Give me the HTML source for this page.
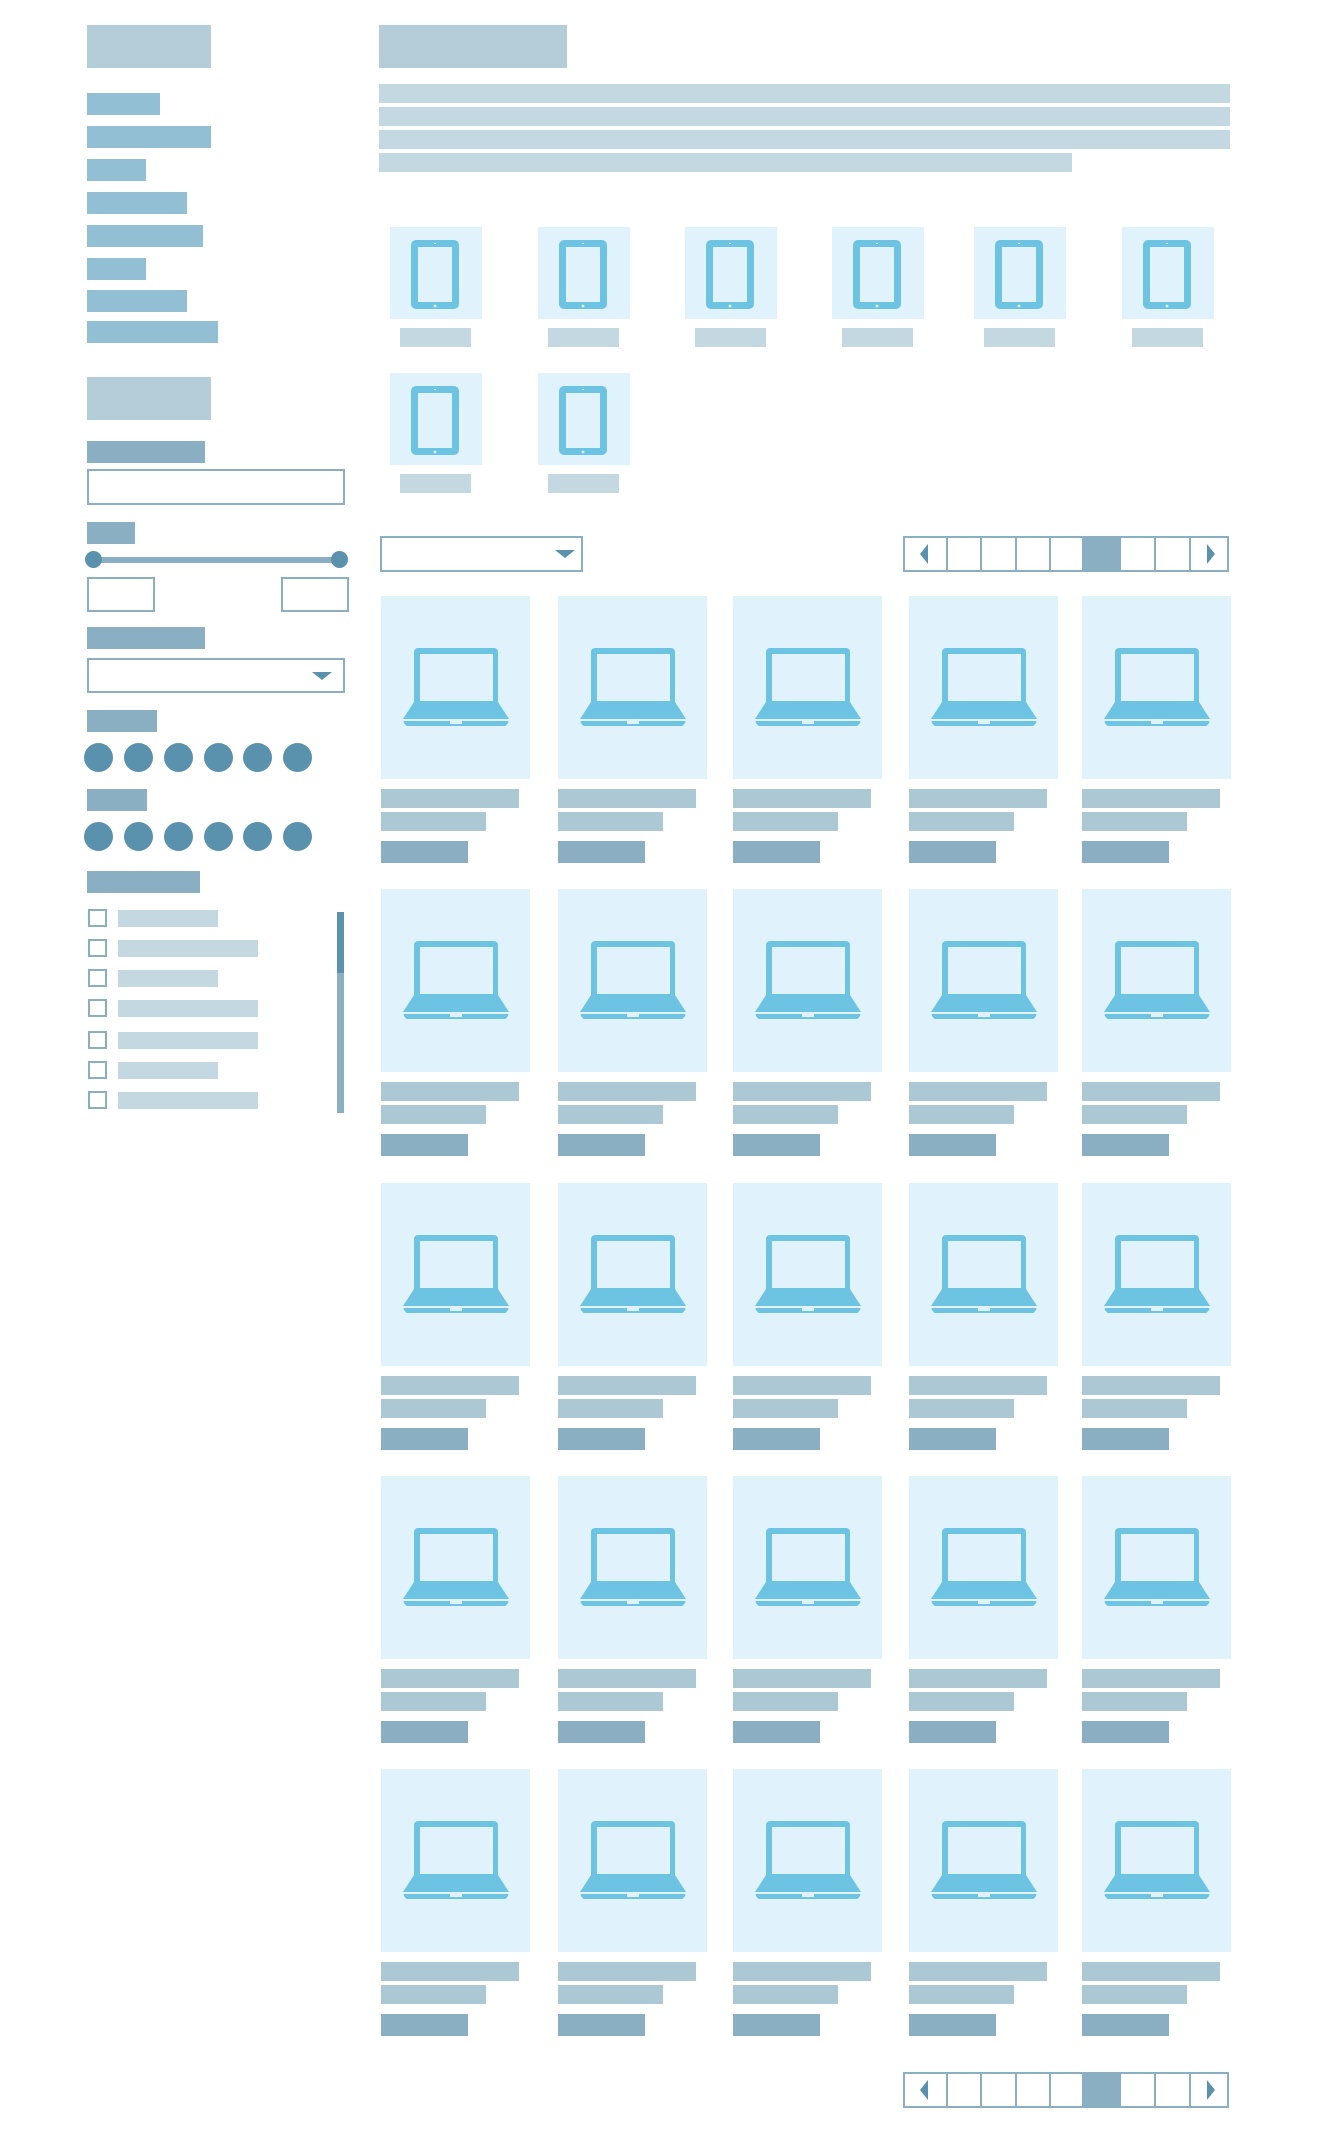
<!DOCTYPE html>
<html><head><meta charset="utf-8"><style>
*{margin:0;padding:0;box-sizing:border-box}
body{width:1330px;height:2137px;background:#fff;position:relative;overflow:hidden;font-family:"Liberation Sans",sans-serif}
div,i,svg{position:absolute;display:block}
.nav{background:#93bfd5;height:22px;left:87px}
.ttl{background:#b5cdd8}
.ln{background:#c3d8e0;left:379px;height:19px}
.lab{background:#8aafc2;left:87px;height:22px}
.box{border:2px solid #8aafc2;background:#fff}
.arr{width:0;height:0;border-left:10px solid transparent;border-right:10px solid transparent;border-top:8px solid #5a92ae}
.dot{width:29px;height:29px;border-radius:50%;background:#5a92ae}
.cb{width:19px;height:18px;border:2px solid #8aafc2;left:88px}
.cbt{background:#c3d8e0;height:17px;left:118px}
.tab{width:92px;height:92px;background:#e0f3fd}
.tab svg{left:21px;top:13px}
.cap{background:#c3d8e0;width:71px;height:19px}
.c{width:149px;height:270px}
.c .t{left:0;top:0;width:149px;height:183px;background:#e0f3fd}
.c svg{left:22px;top:52px}
.b1{top:193px;width:138px;height:19px;background:#acc8d4}
.b2{top:216px;width:105px;height:19px;background:#acc8d4}
.b3{top:245px;width:87px;height:22px;background:#8aafc2}
.pg{left:903px;width:326px;height:36px;border:2px solid #8aafc2;background:#fff}
.pg i{top:0;height:32px;border-left:2px solid #8aafc2}
.pg .act{background:#8aafc2;border:none}
</style></head><body>
<svg width="0" height="0" style="position:absolute"><defs>
<g id="lap"><path fill="#6cc4e2" d="M15,0H91A4,4 0 0 1 95,4V54L106,71H0L11,54V4A4,4 0 0 1 15,0ZM17,6V53H90V6Z"/><path fill="#6cc4e2" d="M1,73H105A2,2 0 0 1 104,76A3,3 0 0 1 101,78H5A3,3 0 0 1 2,76A2,2 0 0 1 1,73Z"/><rect x="47" y="73" width="12" height="3" fill="#e0f3fd"/></g>
<g id="tab"><path fill="#6cc4e2" d="M5,0H43A5,5 0 0 1 48,5V64A5,5 0 0 1 43,69H5A5,5 0 0 1 0,64V5A5,5 0 0 1 5,0ZM7,7V62H41V7Z"/><circle cx="24" cy="66" r="1.4" fill="#e0f3fd"/><rect x="23" y="3" width="2" height="1" fill="#e0f3fd"/></g>
</defs></svg>

<div class="ttl" style="left:87px;top:25px;width:124px;height:43px"></div>
<div class="ttl" style="left:379px;top:25px;width:188px;height:43px"></div>
<div class="ln" style="top:84px;width:851px"></div>
<div class="ln" style="top:107px;width:851px"></div>
<div class="ln" style="top:130px;width:851px"></div>
<div class="ln" style="top:153px;width:693px"></div>

<div class="nav" style="top:93px;width:73px"></div>
<div class="nav" style="top:126px;width:124px"></div>
<div class="nav" style="top:159px;width:59px"></div>
<div class="nav" style="top:192px;width:100px"></div>
<div class="nav" style="top:225px;width:116px"></div>
<div class="nav" style="top:258px;width:59px"></div>
<div class="nav" style="top:290px;width:100px"></div>
<div class="nav" style="top:321px;width:131px"></div>

<div class="ttl" style="left:87px;top:377px;width:124px;height:43px"></div>
<div class="lab" style="top:441px;width:118px"></div>
<div class="box" style="left:87px;top:469px;width:258px;height:36px"></div>
<div class="lab" style="top:522px;width:48px"></div>
<div style="left:93px;top:557px;width:247px;height:6px;background:#8aafc2"></div>
<div style="left:85px;top:551px;width:17px;height:17px;border-radius:50%;background:#5a92ae"></div>
<div style="left:331px;top:551px;width:17px;height:17px;border-radius:50%;background:#5a92ae"></div>
<div class="box" style="left:87px;top:577px;width:68px;height:35px"></div>
<div class="box" style="left:281px;top:577px;width:68px;height:35px"></div>
<div class="lab" style="top:627px;width:118px"></div>
<div class="box" style="left:87px;top:658px;width:258px;height:35px"></div>
<div class="arr" style="left:312px;top:672px"></div>
<div class="lab" style="top:710px;width:70px"></div>
<div class="dot" style="left:84px;top:743px"></div><div class="dot" style="left:124px;top:743px"></div><div class="dot" style="left:164px;top:743px"></div><div class="dot" style="left:204px;top:743px"></div><div class="dot" style="left:243px;top:743px"></div><div class="dot" style="left:283px;top:743px"></div>
<div class="lab" style="top:789px;width:60px"></div>
<div class="dot" style="left:84px;top:822px"></div><div class="dot" style="left:124px;top:822px"></div><div class="dot" style="left:164px;top:822px"></div><div class="dot" style="left:204px;top:822px"></div><div class="dot" style="left:243px;top:822px"></div><div class="dot" style="left:283px;top:822px"></div>
<div class="lab" style="top:871px;width:113px"></div>
<div class="cb" style="top:909px"></div><div class="cbt" style="top:910px;width:100px"></div>
<div class="cb" style="top:939px"></div><div class="cbt" style="top:940px;width:140px"></div>
<div class="cb" style="top:969px"></div><div class="cbt" style="top:970px;width:100px"></div>
<div class="cb" style="top:999px"></div><div class="cbt" style="top:1000px;width:140px"></div>
<div class="cb" style="top:1031px"></div><div class="cbt" style="top:1032px;width:140px"></div>
<div class="cb" style="top:1061px"></div><div class="cbt" style="top:1062px;width:100px"></div>
<div class="cb" style="top:1091px"></div><div class="cbt" style="top:1092px;width:140px"></div>
<div style="left:337px;top:912px;width:7px;height:201px;background:#8aafc2"></div>
<div style="left:337px;top:912px;width:7px;height:61px;background:#5a92ae"></div>

<div class="tab" style="left:390px;top:227px"><svg width="48" height="69"><use href="#tab"/></svg></div>
<div class="tab" style="left:538px;top:227px"><svg width="48" height="69"><use href="#tab"/></svg></div>
<div class="tab" style="left:685px;top:227px"><svg width="48" height="69"><use href="#tab"/></svg></div>
<div class="tab" style="left:832px;top:227px"><svg width="48" height="69"><use href="#tab"/></svg></div>
<div class="tab" style="left:974px;top:227px"><svg width="48" height="69"><use href="#tab"/></svg></div>
<div class="tab" style="left:1122px;top:227px"><svg width="48" height="69"><use href="#tab"/></svg></div>
<div class="cap" style="left:400px;top:328px"></div><div class="cap" style="left:548px;top:328px"></div><div class="cap" style="left:695px;top:328px"></div><div class="cap" style="left:842px;top:328px"></div><div class="cap" style="left:984px;top:328px"></div><div class="cap" style="left:1132px;top:328px"></div>
<div class="tab" style="left:390px;top:373px"><svg width="48" height="69"><use href="#tab"/></svg></div>
<div class="tab" style="left:538px;top:373px"><svg width="48" height="69"><use href="#tab"/></svg></div>
<div class="cap" style="left:400px;top:474px"></div><div class="cap" style="left:548px;top:474px"></div>

<div class="box" style="left:380px;top:536px;width:203px;height:36px"></div>
<div class="arr" style="left:555px;top:550px"></div>

<div class="pg" style="top:536px"><i style="left:41px"></i><i style="left:75px"></i><i style="left:110px"></i><i style="left:144px"></i><i class="act" style="left:177px;width:39px"></i><i style="left:249px"></i><i style="left:284px"></i></div>
<div style="left:920px;top:544px;width:0;height:0;border-top:10px solid transparent;border-bottom:10px solid transparent;border-right:8px solid #5a92ae"></div>
<div style="left:1207px;top:544px;width:0;height:0;border-top:10px solid transparent;border-bottom:10px solid transparent;border-left:8px solid #5a92ae"></div>

<div class="pg" style="top:2072px"><i style="left:41px"></i><i style="left:75px"></i><i style="left:110px"></i><i style="left:144px"></i><i class="act" style="left:177px;width:39px"></i><i style="left:249px"></i><i style="left:284px"></i></div>
<div style="left:920px;top:2080px;width:0;height:0;border-top:10px solid transparent;border-bottom:10px solid transparent;border-right:8px solid #5a92ae"></div>
<div style="left:1207px;top:2080px;width:0;height:0;border-top:10px solid transparent;border-bottom:10px solid transparent;border-left:8px solid #5a92ae"></div>

<div class="c" style="left:381px;top:596px"><i class="t"></i><svg width="106" height="78"><use href="#lap"/></svg><i class="b1"></i><i class="b2"></i><i class="b3"></i></div>
<div class="c" style="left:558px;top:596px"><i class="t"></i><svg width="106" height="78"><use href="#lap"/></svg><i class="b1"></i><i class="b2"></i><i class="b3"></i></div>
<div class="c" style="left:733px;top:596px"><i class="t"></i><svg width="106" height="78"><use href="#lap"/></svg><i class="b1"></i><i class="b2"></i><i class="b3"></i></div>
<div class="c" style="left:909px;top:596px"><i class="t"></i><svg width="106" height="78"><use href="#lap"/></svg><i class="b1"></i><i class="b2"></i><i class="b3"></i></div>
<div class="c" style="left:1082px;top:596px"><i class="t"></i><svg width="106" height="78"><use href="#lap"/></svg><i class="b1"></i><i class="b2"></i><i class="b3"></i></div>
<div class="c" style="left:381px;top:889px"><i class="t"></i><svg width="106" height="78"><use href="#lap"/></svg><i class="b1"></i><i class="b2"></i><i class="b3"></i></div>
<div class="c" style="left:558px;top:889px"><i class="t"></i><svg width="106" height="78"><use href="#lap"/></svg><i class="b1"></i><i class="b2"></i><i class="b3"></i></div>
<div class="c" style="left:733px;top:889px"><i class="t"></i><svg width="106" height="78"><use href="#lap"/></svg><i class="b1"></i><i class="b2"></i><i class="b3"></i></div>
<div class="c" style="left:909px;top:889px"><i class="t"></i><svg width="106" height="78"><use href="#lap"/></svg><i class="b1"></i><i class="b2"></i><i class="b3"></i></div>
<div class="c" style="left:1082px;top:889px"><i class="t"></i><svg width="106" height="78"><use href="#lap"/></svg><i class="b1"></i><i class="b2"></i><i class="b3"></i></div>
<div class="c" style="left:381px;top:1183px"><i class="t"></i><svg width="106" height="78"><use href="#lap"/></svg><i class="b1"></i><i class="b2"></i><i class="b3"></i></div>
<div class="c" style="left:558px;top:1183px"><i class="t"></i><svg width="106" height="78"><use href="#lap"/></svg><i class="b1"></i><i class="b2"></i><i class="b3"></i></div>
<div class="c" style="left:733px;top:1183px"><i class="t"></i><svg width="106" height="78"><use href="#lap"/></svg><i class="b1"></i><i class="b2"></i><i class="b3"></i></div>
<div class="c" style="left:909px;top:1183px"><i class="t"></i><svg width="106" height="78"><use href="#lap"/></svg><i class="b1"></i><i class="b2"></i><i class="b3"></i></div>
<div class="c" style="left:1082px;top:1183px"><i class="t"></i><svg width="106" height="78"><use href="#lap"/></svg><i class="b1"></i><i class="b2"></i><i class="b3"></i></div>
<div class="c" style="left:381px;top:1476px"><i class="t"></i><svg width="106" height="78"><use href="#lap"/></svg><i class="b1"></i><i class="b2"></i><i class="b3"></i></div>
<div class="c" style="left:558px;top:1476px"><i class="t"></i><svg width="106" height="78"><use href="#lap"/></svg><i class="b1"></i><i class="b2"></i><i class="b3"></i></div>
<div class="c" style="left:733px;top:1476px"><i class="t"></i><svg width="106" height="78"><use href="#lap"/></svg><i class="b1"></i><i class="b2"></i><i class="b3"></i></div>
<div class="c" style="left:909px;top:1476px"><i class="t"></i><svg width="106" height="78"><use href="#lap"/></svg><i class="b1"></i><i class="b2"></i><i class="b3"></i></div>
<div class="c" style="left:1082px;top:1476px"><i class="t"></i><svg width="106" height="78"><use href="#lap"/></svg><i class="b1"></i><i class="b2"></i><i class="b3"></i></div>
<div class="c" style="left:381px;top:1769px"><i class="t"></i><svg width="106" height="78"><use href="#lap"/></svg><i class="b1"></i><i class="b2"></i><i class="b3"></i></div>
<div class="c" style="left:558px;top:1769px"><i class="t"></i><svg width="106" height="78"><use href="#lap"/></svg><i class="b1"></i><i class="b2"></i><i class="b3"></i></div>
<div class="c" style="left:733px;top:1769px"><i class="t"></i><svg width="106" height="78"><use href="#lap"/></svg><i class="b1"></i><i class="b2"></i><i class="b3"></i></div>
<div class="c" style="left:909px;top:1769px"><i class="t"></i><svg width="106" height="78"><use href="#lap"/></svg><i class="b1"></i><i class="b2"></i><i class="b3"></i></div>
<div class="c" style="left:1082px;top:1769px"><i class="t"></i><svg width="106" height="78"><use href="#lap"/></svg><i class="b1"></i><i class="b2"></i><i class="b3"></i></div>
</body></html>
